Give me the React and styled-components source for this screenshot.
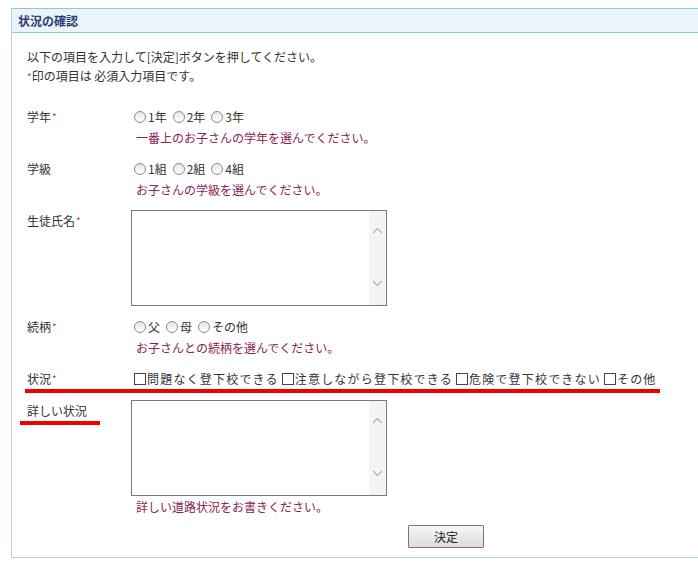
import React from "react";
import styled, { createGlobalStyle } from "styled-components";

const GlobalStyle = createGlobalStyle`
  html, body { margin: 0; padding: 0; background: #fff; overflow: hidden; }
  body {
    font-family: "Noto Sans CJK JP", "DejaVu Sans", sans-serif;
    font-size: 12px;
    color: #333;
  }
`;

const Panel = styled.section`
  margin: 8px 0 0 11px;
  width: 700px;
  border-top: 1px solid #8ccad9;
  border-left: 1px solid #b3d6e0;
  border-bottom: 1px solid #a8d4df;
`;

const PanelHead = styled.h2`
  margin: 0;
  height: 23px;
  line-height: 23px;
  padding-left: 6px;
  background: #ebf3fb;
  border-bottom: 1px solid #93c8d6;
  font-size: 12px;
  font-weight: bold;
  color: #2b3d70;
`;

const PanelBody = styled.div`
  padding: 14px 0 9px 15px;
`;

const Intro = styled.p`
  margin: 0 0 20px;
  line-height: 19px;
`;

const Req = styled.span`
  color: #d23b3b;
  font-size: 10px;
  vertical-align: ${(p) => (p.$inline ? "baseline" : "top")};
  margin-left: ${(p) => (p.$inline ? 0 : 1)}px;
`;

const Row = styled.div`
  display: grid;
  grid-template-columns: 104px auto;
  align-items: start;
  margin-bottom: ${(p) => p.$gap ?? 10}px;
  ${(p) =>
    p.$marked &&
    `
    width: 633px;
    margin-left: -2px;
    padding-left: 2px;
    border-bottom: 4px solid #f20000;
  `}
`;

const Label = styled.div`
  line-height: 21px;
  ${(p) =>
    p.$marked &&
    `
    justify-self: start;
    margin-left: -7px;
    padding-left: 7px;
    width: 73px;
    border-bottom: 4px solid #f20000;
  `}
`;

const Field = styled.div`
  line-height: 21px;
`;

const Options = styled.div`
  display: flex;
  align-items: center;
  height: 21px;
  letter-spacing: ${(p) => p.$spacing ?? 0}px;
  white-space: nowrap;
`;

const Option = styled.label`
  display: inline-flex;
  align-items: center;
  margin-right: ${(p) => p.$gap ?? 3}px;
`;

const Radio = styled.span`
  display: inline-block;
  width: 10px;
  height: 10px;
  border-radius: 50%;
  border: 1px solid #8c8c8c;
  background: linear-gradient(#e6e6e6, #ffffff);
  margin: 0 2px 0 3px;
`;

const Check = styled.span`
  display: inline-block;
  width: 10px;
  height: 10px;
  border: 1px solid #444;
  background: #fff;
  margin: 0 1px 0 3px;
`;

const Hint = styled.div`
  color: #8a2450;
  padding-left: 5px;
  line-height: 21px;
`;

const AreaBox = styled.div`
  display: flex;
  width: 254px;
  height: 94px;
  border: 1px solid #7a7a7a;
  background: #fff;
`;

const Area = styled.textarea`
  flex: 1;
  border: 0;
  outline: none;
  resize: none;
  padding: 2px;
  font: inherit;
  background: transparent;
`;

const Scroll = styled.div`
  width: 17px;
  background: #f4f4f4;
  display: flex;
  flex-direction: column;
  justify-content: space-between;
  align-items: center;
  padding: 16px 0 18px;
`;

const Actions = styled.div`
  padding-left: 381px;
  margin-top: 8px;
`;

const Button = styled.button`
  width: 76px;
  height: 23px;
  border: 1px solid #777;
  border-radius: 1px;
  background: linear-gradient(#f7f7f7, #dcdcdc);
  font: inherit;
  color: #222;
  padding: 0;
`;

const Chevron = ({ up }) => (
  <svg width="11" height="7" viewBox="0 0 11 7">
    <polyline
      points={up ? "1,6 5.5,1.5 10,6" : "1,1 5.5,5.5 10,1"}
      fill="none"
      stroke="#b8b8b8"
      strokeWidth="1.4"
    />
  </svg>
);

function TextBox() {
  return (
    <AreaBox>
      <Area />
      <Scroll>
        <Chevron up />
        <Chevron />
      </Scroll>
    </AreaBox>
  );
}

function RadioGroup({ items }) {
  return (
    <Options>
      {items.map((t) => (
        <Option key={t} $gap={3}>
          <Radio />
          {t}
        </Option>
      ))}
    </Options>
  );
}

export default function App() {
  return (
    <>
      <GlobalStyle />
      <Panel>
        <PanelHead>状況の確認</PanelHead>
        <PanelBody>
          <Intro>
            以下の項目を入力して[決定]ボタンを押してください。
            <br />
            <Req $inline>*</Req>印の項目は 必須入力項目です。
          </Intro>

          <Row>
            <Label>
              学年<Req>*</Req>
            </Label>
            <Field>
              <RadioGroup items={["1年", "2年", "3年"]} />
              <Hint>一番上のお子さんの学年を選んでください。</Hint>
            </Field>
          </Row>

          <Row>
            <Label>学級</Label>
            <Field>
              <RadioGroup items={["1組", "2組", "4組"]} />
              <Hint>お子さんの学級を選んでください。</Hint>
            </Field>
          </Row>

          <Row>
            <Label>
              生徒氏名<Req>*</Req>
            </Label>
            <TextBox />
          </Row>

          <Row>
            <Label>
              続柄<Req>*</Req>
            </Label>
            <Field>
              <RadioGroup items={["父", "母", "その他"]} />
              <Hint>お子さんとの続柄を選んでください。</Hint>
            </Field>
          </Row>

          <Row $marked $gap={7}>
            <Label>
              状況<Req>*</Req>
            </Label>
            <Options $spacing={1.2}>
              {["問題なく登下校できる", "注意しながら登下校できる", "危険で登下校できない", "その他"].map((t) => (
                <Option key={t} $gap={0}>
                  <Check />
                  {t}
                </Option>
              ))}
            </Options>
          </Row>

          <Row $gap={0}>
            <Label $marked>詳しい状況</Label>
            <Field>
              <TextBox />
              <Hint>詳しい道路状況をお書きください。</Hint>
            </Field>
          </Row>

          <Actions>
            <Button>決定</Button>
          </Actions>
        </PanelBody>
      </Panel>
    </>
  );
}
